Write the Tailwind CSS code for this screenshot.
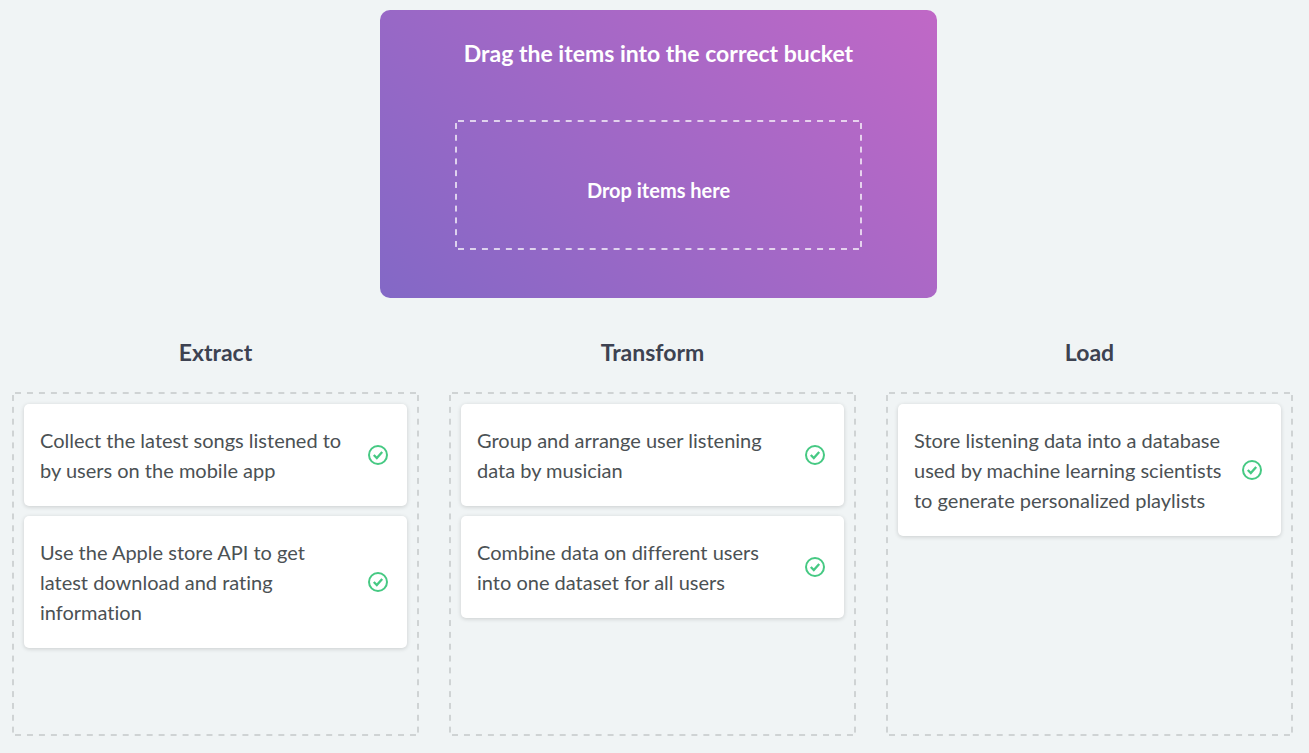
<!DOCTYPE html>
<html lang="en">
<head>
<meta charset="utf-8">
<meta name="viewport" content="width=device-width, initial-scale=1">
<title>Drag the items into the correct bucket</title>
<script src="https://cdn.jsdelivr.net/npm/@tailwindcss/browser@4"></script>
</head>
<body class="min-h-screen bg-[#f0f4f5] pt-2.5 pr-4 pb-4 pl-3 font-['Lato',sans-serif] text-xl leading-[30px] text-[#4b5154] [font-variant-ligatures:none]">
<svg class="hidden" aria-hidden="true">
  <symbol id="check" viewBox="0 0 20 20">
    <circle cx="10" cy="10" r="9" fill="none" stroke="currentColor" stroke-width="2"/>
    <path d="M5.8 10 8.8 13 14.2 7" fill="none" stroke="currentColor" stroke-width="2.3"/>
  </symbol>
</svg>
<main>
  <div class="flex justify-center pl-3">
    <section class="flex w-full max-w-[557px] flex-col rounded-[10px] bg-linear-[45deg,#8368c6,#c068c6] px-[75px] pt-[26px] pb-12 text-center font-bold text-white">
      <h1 class="-mx-10 text-[23px] leading-[34px]">Drag the items into the correct bucket</h1>
      <!-- Dashed frame: one rounded tile pattern per side -->
      <div class="mt-[50px] flex h-[130px] items-center justify-center border-6 border-transparent pt-2.5 [--h:linear-gradient(90deg,#ffffffb3_25%,transparent_25%_75%,#ffffffb3_75%)] [--v:linear-gradient(#ffffffb3_25%,transparent_25%_75%,#ffffffb3_75%)] [background-image:var(--h),var(--h),var(--v),var(--v)] [background-position:0_-6px,0_calc(100%+6px),-6px_0,calc(100%+6px)_0] [background-repeat:round_no-repeat,round_no-repeat,no-repeat_round,no-repeat_round] [background-size:12px_2px,12px_2px,2px_12px,2px_12px]">Drop items here</div>
    </section>
  </div>
  <div class="mt-[37px] grid grid-cols-3 gap-[30px] [--h:linear-gradient(90deg,#cfd3d4_25%,transparent_25%_75%,#cfd3d4_75%)] [--v:linear-gradient(#cfd3d4_25%,transparent_25%_75%,#cfd3d4_75%)]">
    <section class="flex flex-col gap-[23px]">
      <h2 class="text-center text-[23px] leading-[34px] font-bold text-[#3d4251]">Extract</h2>
      <ul class="flex min-h-[344px] flex-1 flex-col gap-2.5 border-6 border-transparent p-1.5 [background-image:var(--h),var(--h),var(--v),var(--v)] [background-position:0_-6px,0_calc(100%+6px),-6px_0,calc(100%+6px)_0] [background-repeat:round_no-repeat,round_no-repeat,no-repeat_round,no-repeat_round] [background-size:12px_2px,12px_2px,2px_12px,2px_12px]">
        <li class="flex items-center justify-between gap-4 rounded-[5px] bg-white py-[21px] pr-[19px] pl-4 shadow-[0_1px_4px_rgba(0,0,0,0.16)]"><p>Collect the latest songs listened to by users on the mobile app</p><svg class="size-5 shrink-0 text-[#46c983]" role="img" aria-label="Correct"><use href="#check"/></svg></li>
        <li class="flex items-center justify-between gap-4 rounded-[5px] bg-white py-[21px] pr-[19px] pl-4 shadow-[0_1px_4px_rgba(0,0,0,0.16)]"><p>Use the Apple store API to get latest download and rating information</p><svg class="size-5 shrink-0 text-[#46c983]" role="img" aria-label="Correct"><use href="#check"/></svg></li>
      </ul>
    </section>
    <section class="flex flex-col gap-[23px]">
      <h2 class="text-center text-[23px] leading-[34px] font-bold text-[#3d4251]">Transform</h2>
      <ul class="flex min-h-[344px] flex-1 flex-col gap-2.5 border-6 border-transparent p-1.5 [background-image:var(--h),var(--h),var(--v),var(--v)] [background-position:0_-6px,0_calc(100%+6px),-6px_0,calc(100%+6px)_0] [background-repeat:round_no-repeat,round_no-repeat,no-repeat_round,no-repeat_round] [background-size:12px_2px,12px_2px,2px_12px,2px_12px]">
        <li class="flex items-center justify-between gap-4 rounded-[5px] bg-white py-[21px] pr-[19px] pl-4 shadow-[0_1px_4px_rgba(0,0,0,0.16)]"><p>Group and arrange user listening data by musician</p><svg class="size-5 shrink-0 text-[#46c983]" role="img" aria-label="Correct"><use href="#check"/></svg></li>
        <li class="flex items-center justify-between gap-4 rounded-[5px] bg-white py-[21px] pr-[19px] pl-4 shadow-[0_1px_4px_rgba(0,0,0,0.16)]"><p>Combine data on different users into one dataset for all users</p><svg class="size-5 shrink-0 text-[#46c983]" role="img" aria-label="Correct"><use href="#check"/></svg></li>
      </ul>
    </section>
    <section class="flex flex-col gap-[23px]">
      <h2 class="text-center text-[23px] leading-[34px] font-bold text-[#3d4251]">Load</h2>
      <ul class="flex min-h-[344px] flex-1 flex-col gap-2.5 border-6 border-transparent p-1.5 [background-image:var(--h),var(--h),var(--v),var(--v)] [background-position:0_-6px,0_calc(100%+6px),-6px_0,calc(100%+6px)_0] [background-repeat:round_no-repeat,round_no-repeat,no-repeat_round,no-repeat_round] [background-size:12px_2px,12px_2px,2px_12px,2px_12px]">
        <li class="flex items-center justify-between gap-4 rounded-[5px] bg-white py-[21px] pr-[19px] pl-4 shadow-[0_1px_4px_rgba(0,0,0,0.16)]"><p>Store listening data into a database used by machine learning scientists to generate personalized playlists</p><svg class="size-5 shrink-0 text-[#46c983]" role="img" aria-label="Correct"><use href="#check"/></svg></li>
      </ul>
    </section>
  </div>
</main>
</body>
</html>
